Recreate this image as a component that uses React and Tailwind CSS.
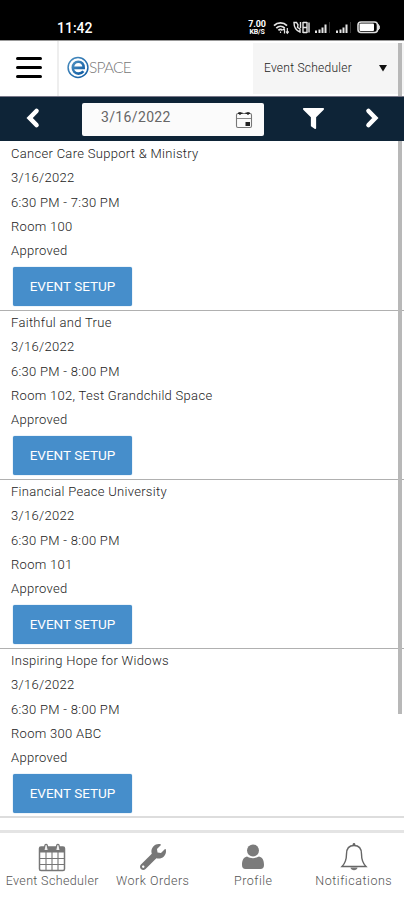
import React, { useState } from "react";
import { FaFilter, FaWrench } from "react-icons/fa";

const events = [
    { title: "Cancer Care Support & Ministry", date: "3/16/2022", time: "6:30 PM - 7:30 PM", room: "Room 100", status: "Approved" },
    { title: "Faithful and True", date: "3/16/2022", time: "6:30 PM - 8:00 PM", room: "Room 102, Test Grandchild Space", status: "Approved" },
    { title: "Financial Peace University", date: "3/16/2022", time: "6:30 PM - 8:00 PM", room: "Room 101", status: "Approved" },
    { title: "Inspiring Hope for Widows", date: "3/16/2022", time: "6:30 PM - 8:00 PM", room: "Room 300 ABC", status: "Approved" },
];

const WifiIcon = () => (
    <svg width="17" height="14" viewBox="0 0 17 14" fill="none" stroke="#e5e5e5" strokeWidth="1.8">
        <path d="M1 4.600C4.600 1 10.400 1 14 4.600M3.300 7.100c2.400-2.200 6-2.200 8.400 0M5.400 9.300c1.200-1.100 3-1.100 4.200 0" />
        <path d="M7.500 10.500v1.500M11.500 12.500v-5M10 9l1.500-1.700M14.300 7v5M13 10.500l1.300 1.700 1.400-1.700" strokeWidth="1.200" />
    </svg>
);

const VibrateIcon = () => (
    <svg width="17" height="13" viewBox="0 0 17 13" fill="none" stroke="#e5e5e5" strokeWidth="1.400">
        <path d="M1 1.500c0 4.500 2 8 6 9.500V8L4.500 6.500 5 4 3.500 1.500z" />
        <path d="M7.500 1v6M10 1v11M14 1v11M16 1.500v10M10 1.500h4M10 6.500h4M10 11.500h4" />
    </svg>
);

const SignalIcon = () => (
    <svg width="15" height="13" viewBox="0 0 15 13" fill="#e5e5e5">
        <path d="M0 9.500h2V12H0zM3.500 8.500h2V12h-2zM6.500 6.500h2V12h-2zM9.500 3.500h2V12h-2z" />
        <path d="M14 1h1v11h-1z" fill="#333" />
    </svg>
);

const BatteryIcon = () => (
    <svg width="24" height="13" viewBox="0 0 24 13">
        <rect x="1" y="1" width="19.500" height="10.500" rx="3" fill="none" stroke="#ddd" strokeWidth="1.600" />
        <rect x="2.500" y="2.500" width="14.500" height="7.500" rx="1" fill="#fff" />
        <path d="M21 3.500c2 .5 2 5 0 5.500z" fill="#ddd" stroke="#ddd" />
    </svg>
);

const LogoMark = () => (
    <svg width="22" height="23" viewBox="0 0 22 23" fill="none">
        <defs>
            <linearGradient id="mark" x1="0" y1="0" x2="1" y2="1">
                <stop offset="0" stopColor="#4c8fc0" />
                <stop offset="1" stopColor="#0f5ba3" />
            </linearGradient>
        </defs>
        <circle cx="11" cy="11.500" r="9.900" stroke="url(#mark)" strokeWidth="1.500" />
        <path d="M6 11.900h10.700c.2-3.700-2-6.200-5.400-6.200-3.200 0-5.500 2.400-5.500 5.900 0 3.600 2.300 6 5.700 6 2.100 0 3.700-.7 4.900-2.300" stroke="url(#mark)" strokeWidth="2.600" />
    </svg>
);

const ArrowIcon = ({ className }) => (
    <svg className={className} width="16" height="22" viewBox="0 0 16 22" fill="none" stroke="#fff" strokeWidth="4.600">
        <path d="M11.500 4L4.700 11l6.800 7" strokeLinecap="round" />
    </svg>
);

const DateIcon = () => (
    <svg width="18" height="18" viewBox="0 0 18 18" fill="none">
        <rect x="1.500" y="2.500" width="15" height="14" rx="1.500" stroke="#777" strokeWidth="1.100" />
        <path d="M2 7.500h14" stroke="#888" />
        <path d="M3 2.200h4.500M10.500 2.200H15" stroke="#222" strokeWidth="1.600" />
        <path d="M5 1v3M13 1v3" stroke="#222" strokeWidth="1.300" />
        <rect x="10.500" y="11" width="4.500" height="4" fill="#222" />
    </svg>
);

const CalendarIcon = () => (
    <svg width="28" height="30" viewBox="0 0 28 30" fill="none" stroke="#777">
        <rect x="1.500" y="5" width="25" height="23.500" rx="1.500" strokeWidth="1.500" />
        <path d="M2 5h24v5.500H2z" fill="#777" stroke="none" />
        <path d="M2 16.500h24M2 22.500h24M8 10v18M14 10v18M20 10v18" strokeWidth="1.100" />
        <path d="M5.800 8.500L7 3a1.200 1.200 0 0 1 2.200 0l1.200 5.500zM17.600 8.500L18.800 3A1.200 1.200 0 0 1 21 3l1.200 5.500z" fill="#eee" strokeWidth="1.200" />
    </svg>
);

const ProfileIcon = () => (
    <svg width="24" height="26" viewBox="0 0 24 26" fill="#7b7b7b">
        <circle cx="12" cy="6.500" r="6" />
        <path d="M6 12.500c3.500 2.200 8.500 2.200 12 0 3.500.7 5 4 5 8.500 0 2.700-1.200 4-3.500 4h-15C2.200 25 1 23.700 1 21c0-4.500 1.500-7.800 5-8.500z" />
    </svg>
);

const BellIcon = () => (
    <svg width="28" height="30" viewBox="0 0 28 30" fill="none" stroke="#666" strokeWidth="1.400">
        <path d="M14 3.500c-5 0-7.500 3.500-7.500 8.500 0 6-1.500 9.500-4.500 12.500h24c-3-3-4.500-6.500-4.500-12.500 0-5-2.500-8.500-7.500-8.500z" />
        <circle cx="14" cy="2.300" r="1.300" fill="#666" stroke="none" />
        <path d="M10.500 25.500h7c-.3 3.500-6.700 3.500-7 0z" fill="#777" stroke="none" />
    </svg>
);

const tabs = [
    { label: "Event Scheduler", icon: <CalendarIcon />, text: "tracking-[0.35px]" },
    { label: "Work Orders", icon: <FaWrench className="size-[26px] -scale-x-100 rotate-90 text-[#777]" />, text: "tracking-[0.5px]" },
    { label: "Profile", icon: <ProfileIcon />, text: "tracking-[0.5px]" },
    { label: "Notifications", icon: <BellIcon />, text: "tracking-[0.55px]" },
];

const EventItem = ({ event }) => (
    <li className="h-[169px] border-b border-[#b0b0b0] pl-[11px] text-[13px] font-light leading-[24.4px] tracking-[0.3px] text-[#222] last:border-transparent">
        <p>{event.title}</p>
        <p>{event.date}</p>
        <p>{event.time}</p>
        <p>{event.room}</p>
        <p>{event.status}</p>
        <button className="ml-[2px] mt-[3px] block h-[39px] w-[119px] rounded-[2px] bg-[#468ecb] text-[13.5px] font-normal leading-[36.5px] tracking-normal text-white shadow-[0_0_1px_#468ecb]">
            EVENT SETUP
        </button>
    </li>
);

const App = () => {
    const [activeTab, setActiveTab] = useState("Event Scheduler");

    return (
        <div className="relative flex h-[900px] w-[404px] flex-col overflow-hidden bg-white font-['Roboto',sans-serif]">
            <div className="flex h-10 shrink-0 items-center bg-black pl-[57px] pt-[15px] text-white">
                <span className="w-[190px] text-[14px] font-medium leading-4">11:42</span>
                <span className="flex w-[20px] flex-col items-center font-bold tracking-[-0.2px]">
                    <span className="text-[9px] leading-[8px]">7.00</span>
                    <span className="text-[7px] leading-[8px]">KB/S</span>
                </span>
                <span className="ml-[6px]"><WifiIcon /></span>
                <span className="ml-[3px]"><VibrateIcon /></span>
                <span className="ml-[5px]"><SignalIcon /></span>
                <span className="ml-[6px]"><SignalIcon /></span>
                <span className="ml-[6px]"><BatteryIcon /></span>
            </div>

            <header className="flex h-14 shrink-0 border-t border-[#999] bg-white">
                <div className="flex w-[59px] border-r-2 border-[#eee]">
                    <button className="flex flex-col gap-[6px] pl-4 pt-4">
                        <span className="h-[3px] w-[26px] rounded-sm bg-black" />
                        <span className="h-[3px] w-[26px] rounded-sm bg-black" />
                        <span className="h-[3px] w-[26px] rounded-sm bg-black" />
                    </button>
                </div>
                <div className="flex flex-1 items-center pb-[3px] pl-2">
                    <LogoMark />
                    <span className="mt-[2px] font-['Lato',sans-serif] text-[15.5px] font-light tracking-[-0.8px] text-[#777]">SPACE</span>
                </div>
                <div className="mt-[2px] flex h-[51px] w-[151px] items-center justify-between bg-[#f5f5f5] pb-[2px] pl-[11px] pr-[17px] text-[12px] font-light tracking-[0.25px] text-[#222]">
                    Event Scheduler
                    <svg width="8" height="8" viewBox="0 0 8 8"><path d="M0 1h8L4 7.500z" fill="#111" /></svg>
                </div>
            </header>

            <div className="flex h-[45px] shrink-0 items-center border-t border-[#778] bg-[#0e2437] text-white">
                <button className="w-[82px] pb-[2px] pl-[25px]"><ArrowIcon /></button>
                <div className="flex h-[33px] w-[182px] items-center justify-between rounded-[2px] bg-[#fbfbfb] pb-[3px] pl-[19px] pr-[11px] text-[14px] tracking-[0.35px] text-[#666]">
                    3/16/2022
                    <span className="mt-[4px]"><DateIcon /></span>
                </div>
                <button className="ml-[39px] pb-[2px]"><FaFilter className="size-[21px]" /></button>
                <button className="ml-[40px] pb-[2px]"><ArrowIcon className="-scale-x-100" /></button>
            </div>

            <ul className="h-[677px] shrink-0 border-b-2 border-[#ddd] pt-[0.8px]">
                {events.map((event) => (
                    <EventItem key={event.title} event={event} />
                ))}
            </ul>

            <nav className="mt-auto flex h-[70px] shrink-0 border-t-[3px] border-[#e4e4e4] bg-white pl-[2px]">
                {tabs.map((tab) => (
                    <button
                        key={tab.label}
                        onClick={() => setActiveTab(tab.label)}
                        aria-current={activeTab === tab.label}
                        className="flex w-[100.7px] flex-col items-center whitespace-nowrap pt-[9px] text-[12.5px] font-light leading-[18px] text-[#555]"
                    >
                        <span className="flex h-[30px] items-center">{tab.icon}</span>
                        <span className={tab.text}>{tab.label}</span>
                    </button>
                ))}
            </nav>

            {/* scrollbar */}
            <div className="absolute left-[398px] top-[43px] h-[53px] w-[4px] bg-[#b8b8b8]" />
            <div className="absolute left-[398px] top-[141px] h-[573px] w-[4px] bg-[#b8b8b8]" />
        </div>
    );
};

export default App;
